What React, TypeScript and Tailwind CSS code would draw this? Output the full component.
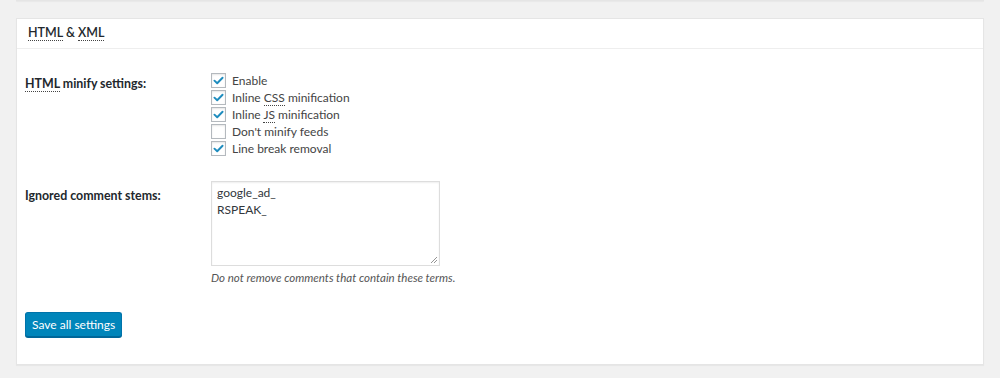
const font = { fontFamily: 'Lato, "Open Sans", sans-serif' };

function Abbr({ children }: { children: React.ReactNode }) {
  return (
    <abbr className="border-b border-dotted border-[#444]" style={{ textDecoration: "none" }}>
      {children}
    </abbr>
  );
}

function Check({ checked, children }: { checked: boolean; children: React.ReactNode }) {
  return (
    <label className="flex items-center h-[17px] gap-[6px]">
      <span className="w-[15px] h-[15px] border border-[#b4b9be] bg-white flex items-center justify-center shadow-[inset_0_1px_2px_rgba(0,0,0,0.1)]">
        {checked && (
          <svg viewBox="0 0 16 16" className="w-[13px] h-[13px]">
            <path d="M3 8.2 L6.4 11.4 L13 4.6" fill="none" stroke="#1e8cbe" strokeWidth={2.4} strokeLinecap="round" strokeLinejoin="round" />
          </svg>
        )}
      </span>
      <span className="text-[12px] text-[#444]">{children}</span>
    </label>
  );
}

export default function App() {
  return (
    <div className="w-[1000px] h-[378px] bg-[#f1f1f1] overflow-hidden relative" style={font}>
      {/* previous box edge */}
      <div className="mx-4 h-[1px] bg-white border-b border-[#e5e5e5] shadow-[0_1px_1px_rgba(0,0,0,0.04)]" />

      <div className="mx-4 mt-[17px] bg-white border border-[#e5e5e5] shadow-[0_1px_1px_rgba(0,0,0,0.04)]">
        {/* header */}
        <div className="h-[30px] border-b border-[#eee] flex items-center pl-[11px]">
          <h2 className="text-[12.5px] font-semibold text-[#23282d]">
            <Abbr>HTML</Abbr> &amp; <Abbr>XML</Abbr>
          </h2>
        </div>

        <div className="pl-[8px] pt-[23px] pb-[27px]">
          {/* HTML minify */}
          <div className="flex">
            <div className="w-[186px] pt-[3px] text-[12.4px] font-bold text-[#23282d]">
              <Abbr>HTML</Abbr> minify settings:
            </div>
            <div className="flex flex-col">
              <Check checked>Enable</Check>
              <Check checked>
                Inline <Abbr>CSS</Abbr> minification
              </Check>
              <Check checked>
                Inline <Abbr>JS</Abbr> minification
              </Check>
              <Check checked={false}>Don't minify feeds</Check>
              <Check checked>Line break removal</Check>
            </div>
          </div>

          {/* ignored stems */}
          <div className="flex mt-[24px]">
            <div className="w-[186px] pt-[6px] text-[12.4px] font-bold text-[#23282d]">
              Ignored comment stems:
            </div>
            <div className="flex flex-col">
              <div className="relative w-[229px] h-[85px] border border-[#ddd] shadow-[inset_0_1px_2px_rgba(0,0,0,0.07)] px-[5px] pt-[2px] text-[12px] leading-[17px] text-[#32373c]">
                <div>google_ad_</div>
                <div>RSPEAK_</div>
                <svg viewBox="0 0 8 8" className="absolute right-[1px] bottom-[1px] w-[8px] h-[8px]">
                  <path d="M7 1 L1 7 M7 4 L4 7" stroke="#888" strokeWidth={0.9} />
                </svg>
              </div>
              <p className="mt-[3px] text-[11.5px] italic text-[#555]">
                Do not remove comments that contain these terms.
              </p>
            </div>
          </div>

          <button className="mt-[26px] h-[25px] px-[6px] rounded-[3px] bg-[#0085ba] border border-[#0073aa] border-b-[#006799] text-white text-[12px] shadow-[0_1px_0_#006799]">
            Save all settings
          </button>
        </div>
      </div>
    </div>
  );
}
